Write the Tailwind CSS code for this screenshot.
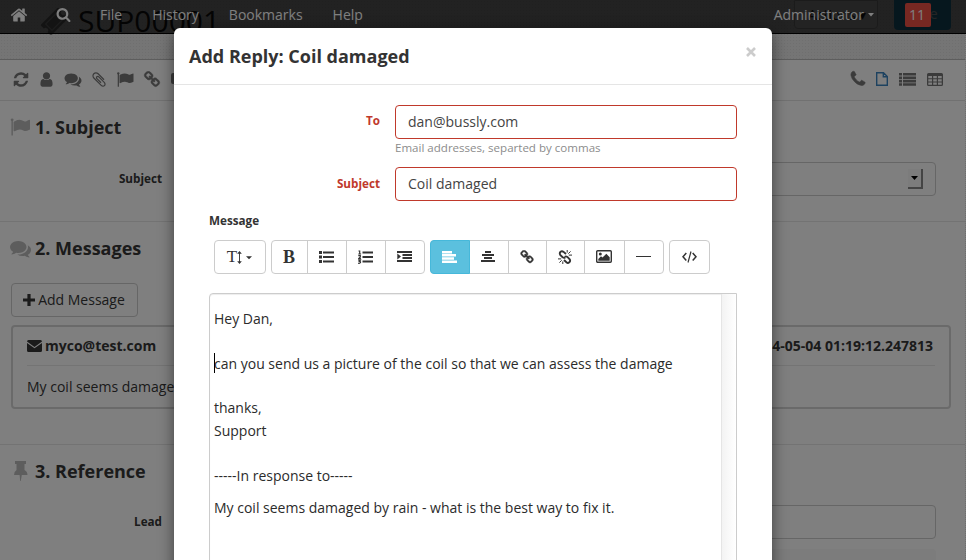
<!DOCTYPE html>
<html lang="en">
<head>
<meta charset="utf-8">
<title>SUP00001</title>
<script src="https://cdn.jsdelivr.net/npm/@tailwindcss/browser@4"></script>
</head>
<body class="font-['Open_Sans',sans-serif] text-[14px] leading-5 text-[#363636] bg-white">
<svg class="hidden">
  <symbol id="home" viewBox="0 0 1792 1792"><path d="M1472 992v480q0 26-19 45t-45 19h-384v-384h-256v384h-384q-26 0-45-19t-19-45v-480q0-1 .5-3t.5-3l575-474 575 474q1 2 1 6zm223-69l-62 74q-8 9-21 11h-3q-13 0-21-7l-692-577-692 577q-12 8-24 7-13-2-21-11l-62-74q-8-10-7-23.5t11-21.5l719-599q32-26 76-26t76 26l244 204v-195q0-14 9-23t23-9h192q14 0 23 9t9 23v408l219 182q10 8 11 21.5t-7 23.5z"/></symbol>
  <symbol id="search" viewBox="0 0 1792 1792"><path d="M1216 832q0-185-131.500-316.500t-316.500-131.500-316.500 131.500-131.500 316.500 131.500 316.500 316.500 131.500 316.500-131.500 131.500-316.500zm512 832q0 52-38 90t-90 38q-54 0-90-38l-343-342q-179 124-399 124-143 0-273.500-55.500t-225-150-150-225-55.500-273.500 55.500-273.500 150-225 225-150 273.500-55.500 273.500 55.500 225 150 150 225 55.500 273.500q0 220-124 399l343 343q37 37 37 90z"/></symbol>
  <symbol id="refresh" viewBox="0 0 1792 1792"><path d="M1639 1056q0 5-1 7-64 268-268 434.500t-478 166.500q-146 0-282.500-55t-243.500-157l-129 129q-19 19-45 19t-45-19-19-45v-448q0-26 19-45t45-19h448q26 0 45 19t19 45-19 45l-137 137q71 66 161 102t187 36q134 0 250-65t186-179q11-17 53-117 8-23 30-23h192q13 0 22.500 9.500t9.500 22.500zm25-800v448q0 26-19 45t-45 19h-448q-26 0-45-19t-19-45 19-45l138-138q-148-137-349-137-134 0-250 65t-186 179q-11 17-53 117-8 23-30 23h-199q-13 0-22.500-9.500t-9.500-22.500v-7q65-268 270-434.500t480-166.500q146 0 284 55.500t245 156.500l130-129q19-19 45-19t45 19 19 45z"/></symbol>
  <symbol id="user" viewBox="0 0 1792 1792"><path d="M1536 1399q0 109-62.500 187t-150.500 78h-854q-88 0-150.500-78t-62.500-187q0-85 8.500-160.500t31.500-152 58.500-131 94-89 134.500-34.500q131 128 313 128t313-128q76 0 134.500 34.500t94 89 58.500 131 31.500 152 8.500 160.500zm-256-887q0 159-112.500 271.500t-271.500 112.500-271.500-112.500-112.500-271.500 112.500-271.500 271.500-112.500 271.500 112.500 112.500 271.500z"/></symbol>
  <symbol id="comments" viewBox="0 0 1792 1792"><path d="M1408 768q0 139-94 257t-256.500 186.500-353.500 68.500q-86 0-176-16-124 88-278 128-36 9-86 16h-3q-11 0-20.500-8t-11.500-21q-1-3-1-6.500t.5-6.500 2-6l2.500-5 3.500-5.500 4-5 4.500-5 4-4.500q5-6 23-25t26-29.500 22.500-29 25-38.500 20.500-44q-124-72-195-177t-71-224q0-139 94-257t256.500-186.500 353.500-68.500 353.500 68.500 256.500 186.500 94 257zm384 256q0 120-71 224.500t-195 176.500q10 24 20.500 44t25 38.500 22.500 29 26 29.500 23 25q1 1 4 4.500t4.500 5 4 5 3.500 5.500l2.500 5 2 6 .5 6.500-1 6.500q-3 14-13 22t-22 7q-50-7-86-16-154-40-278-128-90 16-176 16-271 0-472-132 58 4 88 4 161 0 309-45t264-129q125-92 192-212t67-254q0-77-23-152 129 71 204 178t75 230z"/></symbol>
  <symbol id="clip" viewBox="0 0 1792 1792"><path d="M1596 1385q0 117-79 196t-196 79q-135 0-235-100l-777-776q-113-115-113-271 0-159 110-270t269-111q158 0 273 113l605 606q10 10 10 22 0 16-30.500 46.500t-46.500 30.500q-13 0-23-10l-606-607q-79-77-181-77-106 0-179 75t-73 181q0 105 76 181l776 777q63 63 145 63 64 0 106-42t42-106q0-82-63-145l-581-581q-26-24-60-24-29 0-48 19t-19 48q0 32 25 59l410 410q10 10 10 22 0 16-31 47t-47 31q-12 0-22-10l-410-410q-63-61-63-149 0-82 57-139t139-57q88 0 149 63l581 581q100 98 100 235z"/></symbol>
  <symbol id="flag" viewBox="0 0 1792 1792"><path d="M320 256q0 72-64 110v1266q0 13-9.500 22.500t-22.500 9.500h-64q-13 0-22.500-9.500t-9.500-22.500v-1266q-64-38-64-110 0-53 37.500-90.500t90.500-37.500 90.500 37.500 37.500 90.500zm1472 64v763q0 25-12.500 38.500t-39.500 27.500q-215 116-369 116-61 0-123.500-22t-108.500-48-115.500-48-142.500-22q-192 0-464 146-17 9-33 9-26 0-45-19t-19-45v-742q0-32 31-55 21-14 79-43 236-120 421-120 107 0 200 29t219 88q38 19 88 19 54 0 117.500-21t110-47 88-47 54.500-21q26 0 45 19t19 45z"/></symbol>
  <symbol id="link" viewBox="0 0 1792 1792"><path d="M1520 1216q0-40-28-68l-208-208q-28-28-68-28-42 0-72 32 3 3 19 18.500t21.500 21.500 15 19 13 25.500 3.500 27.500q0 40-28 68t-68 28q-15 0-27.500-3.500t-25.500-13-19-15-21.500-21.500-18.500-19q-33 31-33 73 0 40 28 68l206 207q27 27 68 27 40 0 68-26l147-146q28-28 28-67zm-703-705q0-40-28-68l-206-207q-28-28-68-28-39 0-68 27l-147 146q-28 28-28 67 0 40 28 68l208 208q27 27 68 27 42 0 72-31-3-3-19-18.500t-21.500-21.500-15-19-13-25.500-3.500-27.500q0-40 28-68t68-28q15 0 27.500 3.500t25.500 13 19 15 21.500 21.500 18.500 19q33-31 33-73zm895 705q0 120-85 203l-147 146q-83 83-203 83-121 0-204-85l-206-207q-83-83-83-203 0-123 88-209l-88-88q-86 88-208 88-120 0-204-84l-208-208q-84-84-84-204t85-203l147-146q83-83 203-83 121 0 204 85l206 207q83 83 83 203 0 123-88 209l88 88q86-88 208-88 120 0 204 84l208 208q84 84 84 204z"/></symbol>
  <symbol id="phone" viewBox="0 0 1792 1792"><path d="M1600 1240q0 27-10 70.500t-21 68.500q-21 50-122 106-94 51-186 51-27 0-52.500-3.500t-57.500-12.500-47.500-14.500-55.500-20.500-49-18q-98-35-175-83-128-79-264.500-215.500t-215.500-264.500q-48-77-83-175-3-9-18-49t-20.500-55.500-14.500-47.500-12.500-57.500-3.500-52.500q0-92 51-186 56-101 106-122 25-11 68.500-21t70.500-10q14 0 21 3 18 6 53 76 11 19 30 54t35 63.500 31 53.500q3 4 17.500 25t21.500 35.500 7 28.500q0 20-28.500 50t-62 55-62 53-28.500 46q0 9 5 22.500t8.500 20.500 14 24 11.500 19q76 137 174 235t235 174q2 1 19 11.500t24 14 20.500 8.500 22.500 5q18 0 46-28.500t53-62 55-62 50-28.500q14 0 28.500 7t35.500 21.500 25 17.500q25 15 53.500 31t63.500 35 54 30q70 35 76 53 3 7 3 21z"/></symbol>
</svg>

<div class="relative w-[966px] h-[560px] overflow-hidden">
  <!-- Page -->
  <div class="flex flex-col h-full border-r border-dotted border-[#ddd]">
    <header class="h-[60px] shrink-0 bg-[#eaeaea] bg-[radial-gradient(#dedede_0.7px,transparent_0.8px)] bg-[size:3px_3px] border-b border-[#bbb] flex items-start pl-[41px] pr-[14px]">
      <svg class="w-[27px] h-[27px] mt-[8px] mr-[10px] text-[#888]" viewBox="0 0 27 27"><g transform="rotate(-45 13.500 13.500)"><path fill="currentColor" d="M1 6h25v5a2.500 2.500 0 0 0 0 5v5H1v-5a2.500 2.500 0 0 0 0-5z"/><path fill="none" stroke="#ccc" d="M5.500 9h16v9h-16z"/></g></svg>
      <h1 class="text-[30px] leading-[42px] text-[#222]">SUP00001</h1>
      <div class="ml-auto flex gap-[16px]">
        <div class="w-[84px] h-[29px] border border-[#bbb] bg-[#f4f4f4] rounded-b pl-[13px] leading-[27px] text-[#222] whitespace-nowrap">Actions ▾</div>
        <div class="w-[57px] h-[30px] bg-[#2f9fd0] rounded-b text-center leading-[28px] text-white">Save</div>
      </div>
    </header>
    <div class="h-[41px] shrink-0 border-b border-[#e2e2e2] flex items-center px-[12px] pb-[2px] text-[#777]">
      <div class="flex w-[162px] overflow-hidden gap-[8px] items-center">
        <svg class="w-[18px] h-[17px] shrink-0" fill="currentColor"><use href="#refresh"/></svg>
        <svg class="w-[17px] h-[17px] mr-[1px] shrink-0" fill="currentColor"><use href="#user"/></svg>
        <svg class="w-[18px] h-[17px] shrink-0" fill="currentColor"><use href="#comments"/></svg>
        <svg class="w-[18px] h-[17px] shrink-0" fill="currentColor"><use href="#clip"/></svg>
        <svg class="w-[18px] h-[17px] shrink-0" fill="currentColor"><use href="#flag"/></svg>
        <svg class="w-[18px] h-[17px] ml-[1px] shrink-0" fill="currentColor" stroke="currentColor" stroke-width="50"><use href="#link"/></svg>
        <svg class="w-[18px] h-[16px] shrink-0 ml-[2px]" viewBox="0 0 18 16" fill="currentColor"><rect y="2" width="16" height="11" rx="2"/></svg>
      </div>
      <div class="ml-auto flex items-center pr-[10px]">
        <svg class="w-[18px] h-[18px] mr-[9px]" fill="currentColor" stroke="currentColor" stroke-width="60"><use href="#phone"/></svg>
        <svg class="w-[12px] h-[14px] mr-[11px] text-[#3d85c0]" viewBox="0 0 12 14" fill="none" stroke="currentColor" stroke-width="1.400"><path d="M.7.7h6.800l3.800 3.800v8.800H.7zM7.300.7v4h4"/></svg>
        <svg class="w-[17px] h-[13px] mr-[11px]" viewBox="0 0 17 14" preserveAspectRatio="none" fill="currentColor"><path d="M0 0h3v2.700H0zM4 0h13v2.700H4zM0 3.700h3v2.700H0zM4 3.700h13v2.700H4zM0 7.400h3v2.700H0zM4 7.400h13v2.700H4zM0 11h3v2.700H0zM4 11h13v2.700H4z"/></svg>
        <svg class="w-[16px] h-[13px]" viewBox="0 0 16 13"><path fill="currentColor" fill-rule="evenodd" d="M1.500 0h13A1.500 1.500 0 0 1 16 1.500v10a1.500 1.500 0 0 1-1.500 1.500h-13A1.500 1.500 0 0 1 0 11.500v-10A1.500 1.500 0 0 1 1.500 0zM1.300 3v2.300H5V3zM6.200 3v2.300h3.600V3zM11 3v2.300h3.700V3zM1.300 6.300v2.200H5V6.300zM6.200 6.300v2.200h3.600V6.300zM11 6.300v2.200h3.700V6.300zM1.300 9.600v2.100H5V9.600zM6.200 9.600v2.100h3.600V9.600zM11 9.600v2.100h3.700V9.600z"/></svg>
      </div>
    </div>

    <section class="h-[121px] shrink-0 border-b border-[#e6e6e6] pt-[14px] pl-[10px]">
      <h2 class="flex items-center gap-[5px] text-[18px] leading-6 font-bold"><svg class="w-[20px] h-[20px] text-[#bbb]" fill="currentColor"><use href="#flag"/></svg>1. Subject</h2>
      <div class="flex mt-[23px]">
        <label class="w-[152px] text-right text-[11.700px] leading-[32px] font-bold">Subject</label>
        <div class="ml-[15px] w-[759px] h-[34px] border border-[#ccc] rounded flex items-center justify-end pr-[12px]">
          <span class="w-[15px] h-[20px] bg-[#f8f8f8] border-r-2 border-b-2 border-[#888] flex items-center justify-center"><svg class="w-[7px] h-[4px]" viewBox="0 0 7 4"><path d="M0 0h7L3.500 4z"/></svg></span>
        </div>
      </div>
    </section>

    <section class="h-[223px] shrink-0 border-b border-[#e6e6e6] pt-[14px] pl-[11px] pr-[14px]">
      <h2 class="-ml-px flex items-center gap-[4px] text-[18px] leading-6 font-bold"><svg class="w-[21px] h-[21px] text-[#bbb]" fill="currentColor"><use href="#comments"/></svg>2. Messages</h2>
      <button class="mt-[23px] w-[127px] h-[34px] border border-[#ccc] rounded flex items-center justify-center gap-[3px]"><svg class="w-[12px] h-[12px] -ml-px mb-px" viewBox="0 0 12 12"><path fill="currentColor" d="M4.400 0h3.200v4.400H12v3.200H7.600V12H4.400V7.600H0V4.400h4.400z"/></svg>Add Message</button>
      <div class="mt-[8px] h-[84px] border-2 border-[#d5d5d5] rounded px-[14px]">
        <div class="h-[39px] border-b border-[#e8e8e8] flex items-center font-bold"><svg class="w-[15px] h-[12px] mr-[3px]" viewBox="0 0 15 12"><path fill="currentColor" d="M1.500 0h12A1.500 1.500 0 0 1 15 1.500L7.500 7 0 1.500A1.500 1.500 0 0 1 1.500 0zM0 3l7.500 5.300L15 3v7.500a1.500 1.500 0 0 1-1.500 1.500h-12A1.500 1.500 0 0 1 0 10.500z"/></svg>myco@test.com<span class="ml-auto mr-[2px]">2014-05-04 01:19:12.247813</span></div>
        <p class="leading-[42px]">My coil seems damaged by rain - what is the best way to fix it.</p>
      </div>
    </section>

    <section class="grow pt-[14px] pl-[11px]">
      <h2 class="flex items-center gap-[4px] text-[18px] leading-6 font-bold"><svg class="w-[20px] h-[20px] text-[#bbb]" viewBox="0 0 20 20"><path fill="currentColor" d="M4 0h11v3h-1.500v6q3 1.500 3 5h-5.700L9.800 20h-.6L8.600 14H3q0-3.500 2.500-5V3H4z"/></svg>3. Reference</h2>
      <div class="flex mt-[22px]">
        <label class="w-[151px] text-right text-[11.700px] leading-[32px] font-bold">Lead</label>
        <div class="ml-[15px] w-[759px] h-[34px] border border-[#ccc] rounded"></div>
      </div>
      <div class="ml-[166px] mt-[10px] w-[759px] h-[34px] bg-[#f8f8f8] rounded"></div>
    </section>
  </div>

  <!-- Fixed navigation bar -->
  <nav class="absolute inset-x-0 top-0 h-[34px] bg-black/71 border-b border-black flex items-center text-white pl-[10px] pb-[4px]">
    <svg class="w-[18px] h-[18px] mr-[28px]" fill="currentColor"><use href="#home"/></svg>
    <svg class="w-[15px] h-[15px] mr-[29px]" fill="currentColor"><use href="#search"/></svg>
    <a class="mr-[30px]">File</a><a class="mr-[30px]">History</a><a class="mr-[30px]">Bookmarks</a><a>Help</a>
    <a class="ml-auto mr-[4px]">Administrator</a>
    <svg class="w-[6px] h-[4px] mr-[31px] mt-px" viewBox="0 0 6 4"><path fill="currentColor" d="M0 0h6L3 3.500z"/></svg>
    <span class="w-[26px] h-[24px] mr-[35px] rounded-[2px] bg-[#ee5044] text-center leading-6 pr-[2px]">11</span>
  </nav>

  <div class="absolute inset-0 bg-black/50"></div>

  <!-- Reply dialog -->
  <div class="absolute left-[174px] top-[28px] w-[598px] h-[600px] bg-white rounded-[6px] shadow-[0_5px_15px_rgba(0,0,0,0.5)] text-[#333]">
    <div class="h-[57px] border-b border-[#e5e5e5] flex items-center justify-between px-[15px]">
      <h3 class="text-[18px] font-bold">Add Reply: Coil damaged</h3>
      <svg class="w-[10px] h-[10px] mr-[1px] mb-[8px] text-[#ccc]" viewBox="0 0 10 10"><path stroke="currentColor" stroke-width="2.600" d="M1 1l8 8M9 1L1 9"/></svg>
    </div>
    <div class="pt-[20px] pl-[35px] pr-[35px]">
      <div class="flex">
        <label class="w-[171px] mr-[15px] text-right text-[11.700px] leading-[30px] font-bold text-[#c0392b]">To</label>
        <div class="w-[342px]">
          <div class="h-[34px] border border-[#c0392b] rounded px-[12px] leading-[32px] text-[#444]">dan@bussly.com</div>
          <p class="text-[11.550px] leading-[18px] text-[#8c8c8c]">Email addresses, separted by commas</p>
        </div>
      </div>
      <div class="flex mt-[10px]">
        <label class="w-[171px] mr-[15px] text-right text-[11.700px] leading-[32px] font-bold text-[#c0392b]">Subject</label>
        <div class="w-[342px] h-[34px] border border-[#c0392b] rounded px-[12px] leading-[32px] text-[#444]">Coil damaged</div>
      </div>
      <div class="mt-[9px] text-[11.700px] leading-5 font-bold">Message</div>

      <div class="flex gap-[5px] mt-[10px] ml-[5px] h-[34px]">
        <div class="w-[52px] border border-[#ccc] rounded flex items-center justify-center font-['Liberation_Serif',serif] text-[17px] pr-[1px]">T<svg class="w-[5px] h-[13px] mr-[4px]" viewBox="0 0 5 14"><path fill="currentColor" d="M2.500 0L5 3H3v8h2l-2.500 3L0 11h2V3H0z"/></svg><svg class="w-[6px] h-[4px] mt-[2px]" viewBox="0 0 7 4"><path fill="currentColor" d="M0 0h7L3.500 3.500z"/></svg></div>

        <div class="flex w-[154px] border border-[#ccc] rounded">
          <div class="w-[36px] pr-px border-r border-[#ccc] flex items-center justify-center font-['Liberation_Serif',serif] font-bold text-[18px]">B</div>
          <div class="w-[39px] pr-[2px] pb-px border-r border-[#ccc] flex items-center justify-center"><svg class="w-[15px] h-[12px]" viewBox="0 0 15 12"><path fill="currentColor" d="M0 0h3v3H0zM0 4.500h3v3H0zM0 9h3v3H0zM4 .5h11v2H4zM4 5h11v2H4zM4 9.500h11v2H4z"/></svg></div>
          <div class="w-[39px] pr-[2px] pb-px border-r border-[#ccc] flex items-center justify-center"><svg class="w-[15px] h-[14px]" viewBox="0 0 15 14"><path fill="currentColor" d="M4.500 1.500H15v2H4.500zM4.500 6H15v2H4.500zM4.500 10.500H15v2H4.500z"/><path fill="none" stroke="currentColor" stroke-width="1.200" d="M.5 1h1.200v3M.3 4h2.800M.3 5.600h2v1.300L.6 8.700h2.300M.2 10.200h2.200l-1 1.200q1.500 0 1 1.300-.7.900-2.200.4"/></svg></div>
          <div class="w-[38px] pr-[2px] pb-px flex items-center justify-center"><svg class="w-[15px] h-[11px]" viewBox="0 0 15 11"><path fill="currentColor" d="M0 0h15v2H0zM5.500 3H15v2H5.500zM5.500 6H15v2H5.500zM0 9h15v2H0zM.3 2.500l3.700 3-3.700 3z"/></svg></div>
        </div>

        <div class="flex w-[234px] border border-[#ccc] rounded">
          <div class="-my-px -ml-px w-[40px] pr-[2px] pb-px bg-[#5bc0de] border border-[#46b8da] rounded-l flex items-center justify-center text-white"><svg class="w-[15px] h-[12px]" viewBox="0 0 15 12"><path fill="currentColor" d="M0 0h10v2.400H0zM0 3.100h14v2.400H0zM0 6.300h12v2.400H0zM0 9.500h15V12H0z"/></svg></div>
          <div class="w-[39px] pr-[2px] pb-px border-r border-[#ccc] flex items-center justify-center"><svg class="w-[14px] h-[11px]" viewBox="0 0 14 11"><path fill="currentColor" d="M4 0h6v2H4zM1 3h12v2H1zM3 6h8v2H3zM0 9h14v2H0z"/></svg></div>
          <div class="w-[38px] pr-[2px] pb-px border-r border-[#ccc] flex items-center justify-center"><svg class="w-[14px] h-[14px]" fill="currentColor" stroke="currentColor" stroke-width="60"><use href="#link"/></svg></div>
          <div class="w-[38px] pr-[2px] pb-px border-r border-[#ccc] flex items-center justify-center"><svg class="w-[14px] h-[14px]" viewBox="0 0 14 14" fill="none" stroke="currentColor"><path stroke-width="1.900" d="M8 4L5.600 1.900Q4 .6 2.600 1.800T2.200 4.800L4.600 7.200q1.400 1 2.600.2M6 10l2.400 2.300q1.500 1.200 2.900 0t.4-3L9.400 6.900q-1.400-1-2.600-.2"/><path stroke-width="1" d="M9.200 0v2.600M10.300 3.700L12.600 1.400M10.800 5.100H14M4.800 14v-2.600M3.700 10.300l-2.300 2.300M3.200 8.900H0"/></svg></div>
          <div class="w-[40px] pr-[2px] pb-px border-r border-[#ccc] flex items-center justify-center"><svg class="w-[16px] h-[13px]" viewBox="0 0 16 13"><rect x=".7" y=".7" width="14.600" height="11.600" rx="1" fill="none" stroke="currentColor" stroke-width="1.400"/><circle cx="4.300" cy="4" r="1.500" fill="currentColor"/><path fill="currentColor" d="M2.300 10.800V9L5 6.300l1.500 1.300L10.300 3.800l3.400 3.400v3.600z"/></svg></div>
          <div class="w-[38px] pr-[2px] pb-px flex items-center justify-center"><span class="w-[15px] h-[1px] bg-[#333]"></span></div>
        </div>

        <div class="w-[41px] pr-[1px] border border-[#ccc] rounded flex items-center justify-center"><svg class="w-[15px] h-[12px]" viewBox="0 0 15 12" fill="none" stroke="currentColor" stroke-width="1.500"><path d="M4.300 2L1 5.800l3.300 3.800M10.700 2L14 5.800l-3.300 3.800"/><path stroke-width="1.200" d="M9 .5L6 11.500"/></svg></div>
      </div>

      <div class="mt-[19px] w-[528px] h-[300px] border border-[#ccc] rounded-tl flex shadow-[inset_0_1px_1px_rgba(0,0,0,0.075)]">
        <div class="grow pl-[4px] pt-[14px] text-[14px] leading-[22.400px] text-[#2b2b2b]">
          <p>Hey Dan,</p><br>
          <p class="relative">can you send us a picture of the coil so that we can assess the damage<span class="absolute left-0 top-0 w-px h-[20px] bg-black"></span></p><br>
          <p class="-mt-px mb-px">thanks,</p>
          <p>Support</p><br>
          <p>-----In response to-----</p>
          <p class="mt-[10px]">My coil seems damaged by rain - what is the best way to fix it.</p>
        </div>
        <div class="w-[15px] border-l border-[#e5e5e5] bg-linear-to-r from-[#f3f3f3] to-white"></div>
      </div>
    </div>
  </div>
</div>
</body>
</html>
